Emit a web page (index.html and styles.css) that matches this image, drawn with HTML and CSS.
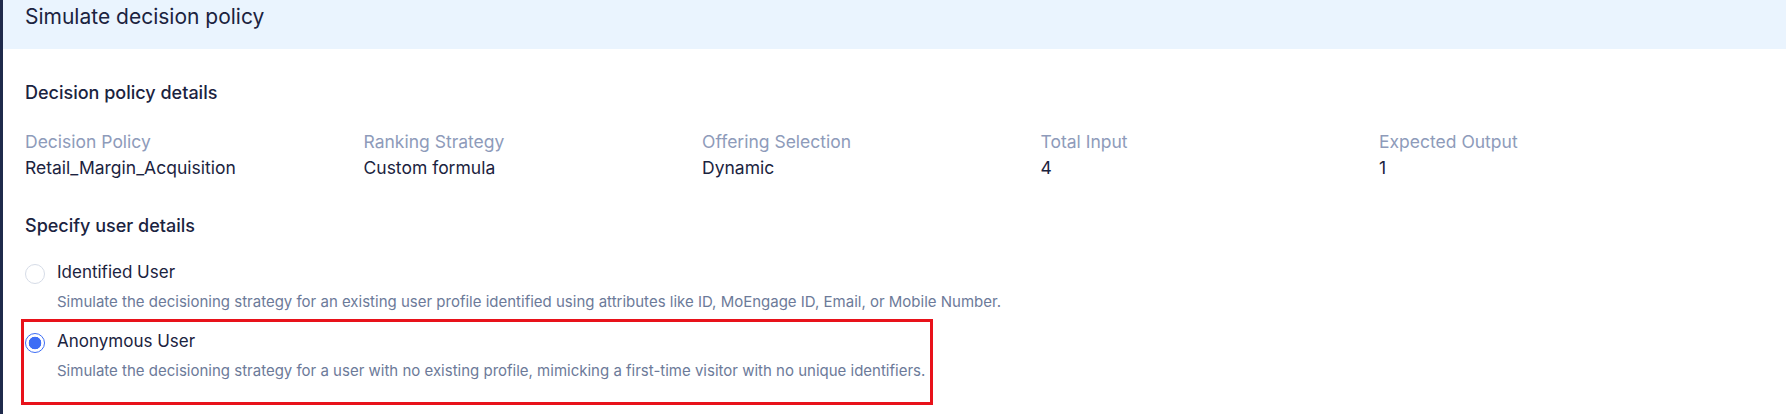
FILE: index.html
```html
<!DOCTYPE html>
<html lang="en">
<head>
<meta charset="utf-8">
<title>Simulate decision policy</title>
<link rel="stylesheet" href="styles.css">
</head>
<body>
<div class="page">
  <header class="modal-header">
    <h1 class="modal-title">Simulate decision policy</h1>
  </header>
  <main class="modal-body">
    <section class="section">
      <h2 class="section-title">Decision policy details</h2>
      <div class="details-grid">
        <div class="detail">
          <div class="detail-label">Decision Policy</div>
          <div class="detail-value">Retail_Margin_Acquisition</div>
        </div>
        <div class="detail">
          <div class="detail-label">Ranking Strategy</div>
          <div class="detail-value">Custom formula</div>
        </div>
        <div class="detail">
          <div class="detail-label">Offering Selection</div>
          <div class="detail-value">Dynamic</div>
        </div>
        <div class="detail">
          <div class="detail-label">Total Input</div>
          <div class="detail-value">4</div>
        </div>
        <div class="detail">
          <div class="detail-label">Expected Output</div>
          <div class="detail-value">1</div>
        </div>
      </div>
    </section>
    <section class="section section-user">
      <h2 class="section-title">Specify user details</h2>
      <div class="radio-group">
        <label class="radio-option">
          <span class="radio-row">
            <span class="radio"></span>
            <span class="radio-title">Identified User</span>
          </span>
          <span class="radio-desc">Simulate the decisioning strategy for an existing user profile identified using attributes like ID, MoEngage ID, Email, or Mobile Number.</span>
        </label>
        <label class="radio-option">
          <span class="radio-row">
            <span class="radio radio-checked"></span>
            <span class="radio-title">Anonymous User</span>
          </span>
          <span class="radio-desc">Simulate the decisioning strategy for a user with no existing profile, mimicking a first-time visitor with no unique identifiers.</span>
        </label>
      </div>
    </section>
  </main>
  <div class="highlight-box"></div>
</div>
</body>
</html>
```

FILE: styles.css
```css
* { box-sizing: border-box; }

html, body {
  margin: 0;
  padding: 0;
  background: #ffffff;
}

body {
  font-family: "Inter", "Noto Sans", "Liberation Sans", sans-serif;
  color: #1b2340;
  width: 1786px;
  height: 414px;
  overflow: hidden;
}

.page {
  position: relative;
  height: 414px;
  border-left: 3px solid #1f2a4b;
}

.modal-header {
  height: 49px;
  background: #eaf4fe;
  padding: 3px 22px 0;
}

.modal-title {
  margin: 0;
  font-size: 21px;
  line-height: 28px;
  font-weight: 400;
  color: #1b2340;
}

.modal-body {
  padding: 32px 22px 0;
}

.section-title {
  margin: 0;
  font-size: 18px;
  line-height: 24px;
  font-weight: 500;
  color: #1b2340;
}

.details-grid {
  display: grid;
  grid-template-columns: repeat(5, 338.5px);
  margin-top: 24px;
}

.detail-label,
.detail-value {
  font-size: 17.5px;
  line-height: 26px;
}

.detail-label {
  color: #8e9bba;
}

.detail-value {
  color: #1b2340;
}

.section-user {
  margin-top: 33px;
}

.radio-group {
  display: flex;
  flex-direction: column;
  gap: 15px;
  margin-top: 21px;
}

.radio-option {
  display: flex;
  flex-direction: column;
  gap: 6px;
  cursor: pointer;
}

.radio-row {
  display: flex;
  align-items: center;
  gap: 12px;
}

.radio {
  width: 20px;
  height: 20px;
  border-radius: 50%;
  border: 1px solid #d6dce7;
  background: #ffffff;
  margin-top: 3px;
  flex: none;
}

.radio-checked {
  border-color: #3d6df5;
  background: radial-gradient(circle, #3d6df5 0 6px, #ffffff 6.6px);
}

.radio-title {
  font-size: 17px;
  line-height: 26px;
  color: #1b2340;
}

.radio-desc {
  padding-left: 32px;
  font-size: 15px;
  line-height: 22px;
  color: #6c7a99;
}

.highlight-box {
  position: absolute;
  left: 18px;
  top: 319px;
  width: 912px;
  height: 86px;
  border: 3px solid #e8121a;
  pointer-events: none;
}
```
